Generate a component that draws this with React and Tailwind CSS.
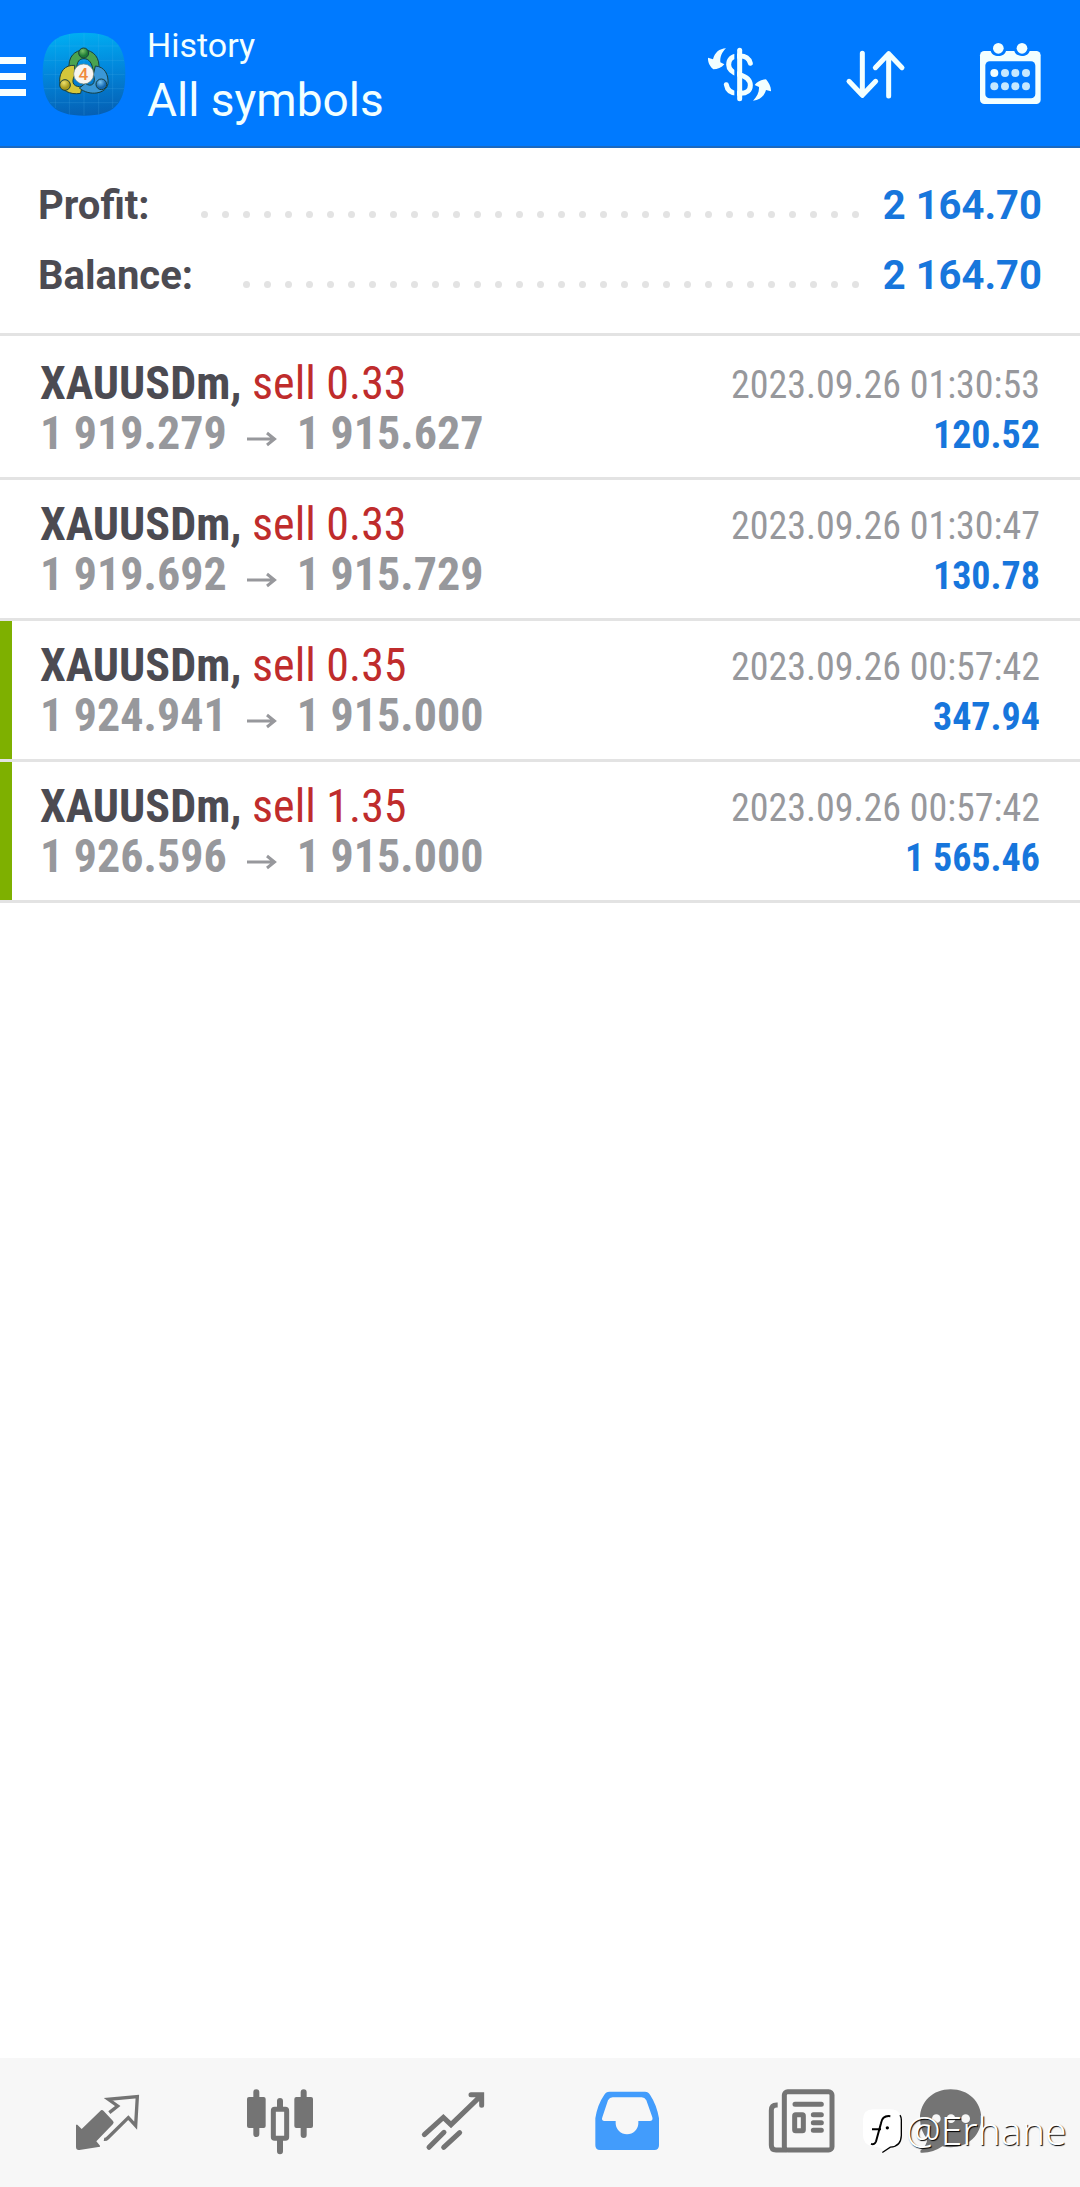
import { clsx } from "clsx";

const deals = [
  { id: 1, volume: "0.33", open: "1 919.279", close: "1 915.627", time: "2023.09.26 01:30:53", profit: "120.52" },
  { id: 2, volume: "0.33", open: "1 919.692", close: "1 915.729", time: "2023.09.26 01:30:47", profit: "130.78" },
  { id: 3, volume: "0.35", open: "1 924.941", close: "1 915.000", time: "2023.09.26 00:57:42", profit: "347.94", tp: true },
  { id: 4, volume: "1.35", open: "1 926.596", close: "1 915.000", time: "2023.09.26 00:57:42", profit: "1 565.46", tp: true },
];

function AppLogo() {
  return (
    <svg viewBox="36 36 252 252" className="size-[84px]">
      <defs>
        <linearGradient id="sky" x1="0.4" y1="0" x2="0.5" y2="1">
          <stop offset="0" stopColor="#00aef2" />
          <stop offset="0.45" stopColor="#0288dc" />
          <stop offset="1" stopColor="#0560b4" />
        </linearGradient>
        <radialGradient id="green" cx="0.4" cy="0.3">
          <stop offset="0" stopColor="#7cc46a" />
          <stop offset="1" stopColor="#1c7a35" />
        </radialGradient>
        <radialGradient id="yellow" cx="0.4" cy="0.3">
          <stop offset="0" stopColor="#eee06a" />
          <stop offset="1" stopColor="#a79a1c" />
        </radialGradient>
        <radialGradient id="blue" cx="0.4" cy="0.3">
          <stop offset="0" stopColor="#7cc6f0" />
          <stop offset="1" stopColor="#1467b0" />
        </radialGradient>
      </defs>
      <path
        d="M162 38C252 38 286 72 286 162S252 287 162 287 38 252 38 162 72 38 162 38Z"
        fill="url(#sky)"
      />
      <path
        d="M76 60V264M118 42V284M162 40V286M206 42V284M248 60V264M58 78H266M42 121H282M42 163H284M42 206H282M60 248H264"
        stroke="#55b6f0"
        strokeOpacity="0.28"
        strokeWidth="2"
      />
      <g stroke="#173f3f" strokeWidth="3">
        <path d="M118 148C112 112 134 90 162 90S212 114 206 150L190 158C188 128 176 116 162 116S140 124 140 148Z" fill="#4aa350" />
        <path d="M134 136C104 134 88 156 89 184C90 210 120 226 152 220L156 200C136 202 120 192 134 166Z" fill="#d5c63a" />
        <path d="M196 138C224 140 236 164 234 190C230 222 178 230 148 204L166 190C184 204 200 190 190 164Z" fill="#3b97d6" />
        <circle cx="161" cy="99" r="15" fill="url(#green)" />
        <circle cx="105" cy="195" r="16" fill="url(#yellow)" />
        <circle cx="214" cy="193" r="16" fill="url(#blue)" />
      </g>
      <circle cx="161" cy="162" r="30" fill="#f7f5f2" stroke="#7e8c7c" strokeWidth="2" />
      <text x="160" y="180" textAnchor="middle" fontFamily="Roboto" fontWeight="500" fontSize="52" fill="#f08a3c">
        4
      </text>
    </svg>
  );
}

function CurrencyIcon() {
  return (
    <svg viewBox="72 60 216 216" className="size-[72px]">
      <path
        d="M211 130C208 116 196 108 180 108H174C156 108 146 118 146 134C146 150 158 158 178 164C200 170 211 180 211 196C211 212 200 220 182 220H172C154 220 142 212 139 194"
        fill="none"
        stroke="#f2ffff"
        strokeWidth="15"
        strokeLinecap="round"
      />
      <path d="M167 90V245" stroke="#007aff" strokeWidth="8" />
      <path d="M179 91V236" stroke="#f2ffff" strokeWidth="15" strokeLinecap="round" />
      <g fill="#f2ffff">
        <path d="M138 85C118 86 104 98 99 118L84 113C83 128 91 140 100 148C112 148 125 143 133 133L121 127C120 110 125 98 138 85Z" />
        <path d="M219 242C240 240 253 228 258 210L273 214C274 201 266 188 258 178C244 179 231 185 224 195L237 201C238 216 231 230 219 242Z" />
      </g>
    </svg>
  );
}

function SortIcon() {
  return (
    <svg viewBox="477 60 216 216" className="size-[72px]">
      <path
        d="M547 100V225M507 184L547 226L587 184M626 228V101M586 143L626 101L666 143"
        fill="none"
        stroke="#f2ffff"
        strokeWidth="15"
        strokeLinecap="round"
        strokeLinejoin="round"
      />
    </svg>
  );
}

function CalendarIcon() {
  return (
    <svg viewBox="882 60 216 216" className="size-[72px]">
      <rect x="900" y="93" width="182" height="159" rx="13" fill="#f2ffff" />
      <rect x="916" y="124" width="150" height="111" rx="13" fill="#007aff" />
      <path d="M932 90V93C934 102 944 108 955 108S976 102 978 93V90ZM1003 90V93C1005 102 1015 108 1026 108S1047 102 1049 93V90Z" fill="#007aff" />
      <g fill="#f2ffff">
        <circle cx="955" cy="85" r="16" />
        <circle cx="1026" cy="85" r="16" />
        <circle cx="943" cy="159" r="12" />
      </g>
      <g fill="#c5e8ff">
        <circle cx="975" cy="159" r="12" />
        <circle cx="1006" cy="159" r="12" />
        <circle cx="1038" cy="159" r="12" />
        <circle cx="943" cy="199" r="12" />
        <circle cx="975" cy="199" r="12" />
        <circle cx="1006" cy="199" r="12" />
        <circle cx="1038" cy="199" r="12" />
      </g>
    </svg>
  );
}

function Header() {
  return (
    <header className="flex h-[148px] items-start border-b-2 border-[#1b69c0] bg-[#007aff] text-[#f2ffff]">
      <div className="mt-[57px] flex w-[26px] flex-col gap-[9px]">
        <span className="h-[7px] bg-[#f8ffff]" />
        <span className="h-[7px] bg-[#f8ffff]" />
        <span className="h-[7px] bg-[#f8ffff]" />
      </div>
      <div className="mt-8 ml-4">
        <AppLogo />
      </div>
      <div className="mt-[24px] ml-[21px] flex-1">
        <div className="text-[34px] leading-[42px]">History</div>
        <h1 className="mt-[7px] text-[46px] leading-[54px]">All symbols</h1>
      </div>
      <div className="mt-10 mr-[34px] flex gap-[63px]">
        <CurrencyIcon />
        <SortIcon />
        <CalendarIcon />
      </div>
    </header>
  );
}

function SummaryRow({ label, value, dots }) {
  return (
    <div className="flex h-[70px] items-center justify-between text-[40px] font-bold">
      <span className="text-[#4c4b52]">{label}</span>
      <div className="flex items-center">
        <div className="mt-[17px] mr-[24px] flex gap-[14px]">
          {Array.from({ length: dots }, (_, i) => (
            <span key={i} className="size-[7px] rounded-full bg-[#e3e3e3]" />
          ))}
        </div>
        <span className="text-[#1776dc]">{value}</span>
      </div>
    </div>
  );
}

function DealRow({ deal }) {
  return (
    <li
      className={clsx(
        "flex h-[141px] justify-between border-b-3 border-[#e3e3e3] pr-10 font-stretch-condensed",
        deal.tp ? "pl-7" : "pl-10"
      )}
    >
      {deal.tp && <div className="-ml-7 h-full w-3 bg-[#7eb000]" />}
      <div className={clsx("flex-1 pt-[19px] text-[46px] leading-[50px]", deal.tp && "pl-7")}>
        <div>
          <span className="font-bold text-[#4c4b52]">XAUUSDm,</span>{" "}
          <span className="text-[#bf2c2c]">sell {deal.volume}</span>
        </div>
        <div className="flex items-center font-bold text-[#97989c]">
          <span>{deal.open}</span>
          <svg viewBox="0 0 30 16" className="mx-[20px] mt-[12px] h-4 w-[30px]">
            <path d="M0 8H27M20 2L27.5 8L20 14" fill="none" stroke="#97989c" strokeWidth="3" />
          </svg>
          <span>{deal.close}</span>
        </div>
      </div>
      <div className="pt-[21px] text-right text-[38px] leading-[50px]">
        <div className="text-[#97989c]">{deal.time}</div>
        <div className="font-bold text-[#1776dc]">{deal.profit}</div>
      </div>
    </li>
  );
}

function BottomNav() {
  return (
    <nav className="flex h-[129px] gap-[101px] bg-[#f7f7f7] pt-[27px] pl-[72px] text-[#747474]">
      <svg viewBox="96 135 216 216" className="size-[72px] shrink-0">
        <path
          d="M183 211Q187 209 191 213L219 243Q223 248 219 252L169 304L180 317V320L118 330Q108 331 108 321V254H112L125 267Z"
          fill="currentColor"
        />
        <path
          d="M208 218L233 198L205 178L292 170L287 257L265 233L203 294Q198 299 192 298"
          fill="none"
          stroke="currentColor"
          strokeWidth="10"
        />
      </svg>

      <svg viewBox="615 135 216 216" className="size-[72px] shrink-0">
        <path d="M649 157V282M791 157V285M720 183V208M720 295V334" stroke="currentColor" strokeWidth="18" strokeLinecap="round" />
        <rect x="621" y="171" width="56" height="93" rx="6" fill="currentColor" />
        <rect x="763" y="171" width="56" height="93" rx="6" fill="currentColor" />
        <rect x="700" y="208" width="40" height="87" rx="4" fill="#f7f7f7" stroke="currentColor" strokeWidth="15" />
      </svg>

      <svg viewBox="1134 135 216 216" className="size-[72px] shrink-0">
        <path
          d="M1153 284L1210 232L1233 254L1324 166M1293 164H1325V196M1167 322L1212 277M1211 322L1259 278"
          fill="none"
          stroke="currentColor"
          strokeWidth="15"
          strokeLinecap="round"
        />
      </svg>

      <svg viewBox="93 135 216 216" className="size-[72px] shrink-0">
        <path
          d="M148 155H255Q265 155 270 164Q290 194 297 235V316Q297 330 283 330H120Q106 330 106 316V235Q112 194 133 164Q138 155 148 155Z"
          fill="#429cfc"
        />
        <path
          d="M158 172H245Q254 172 259 181L277 232Q280 243 269 243H235V250A34 33 0 0 1 167 250V243H134Q123 243 127 232L144 181Q149 172 158 172Z"
          fill="#f7f7f7"
        />
      </svg>

      <svg viewBox="612 135 216 216" className="size-[72px] shrink-0">
        <g fill="none" stroke="currentColor" strokeWidth="15">
          <rect x="673" y="155" width="143" height="175" rx="10" />
          <path d="M653 195H650Q634 195 634 211V316Q634 330 648 330H680" />
          <path d="M705 193H784M760 224H784M760 248H784M760 271H784" strokeLinecap="round" />
          <rect x="704" y="224" width="26" height="48" rx="3" />
        </g>
      </svg>

      <div className="relative -ml-6 size-[72px] shrink-0">
        <svg viewBox="1059 135 216 216" className="size-[72px]">
          <path
            d="M1172 148C1225 148 1264 185 1264 235S1225 322 1172 322Q1158 322 1147 319Q1118 340 1082 338Q1080 334 1082 331Q1100 318 1102 297Q1080 272 1080 235C1080 185 1119 148 1172 148Z"
            fill="currentColor"
          />
          <g fill="#f7f7f7">
            <circle cx="1129" cy="236" r="13" />
            <circle cx="1173" cy="236" r="13" />
            <circle cx="1217" cy="236" r="13" />
          </g>
        </svg>

        {/* author stamp, lies over the chat button */}
        <div className="absolute top-[21px] -left-[51px] flex items-center whitespace-nowrap">
          <svg viewBox="905 200 120 140" className="h-[47px] w-10">
            <path
              d="M938 206H990Q1022 206 1022 238V285Q1022 318 990 320L966 336L964 324Q950 318 936 317Q908 312 908 284V238Q908 206 938 206Z"
              fill="#fff"
            />
            <path d="M1019 224Q1024 232 1023 245V285Q1022 318 990 320L966 336" fill="none" stroke="#000" strokeWidth="4" />
            <path
              d="M990 227Q966 224 962 248L947 303Q943 314 932 310M935 266H962"
              fill="none"
              stroke="#000"
              strokeWidth="6"
            />
            <circle cx="981" cy="262" r="5" fill="#000" />
          </svg>
          <span className="ml-[4px] font-['Noto_Sans'] text-[39px] leading-[48px] font-light text-white [text-shadow:1px_1px_1px_#000]">
            @Erhane
          </span>
        </div>
      </div>
    </nav>
  );
}

export default function App() {
  return (
    <div className="flex h-[2187px] w-[1080px] flex-col overflow-hidden bg-white font-[Roboto,sans-serif]">
      <Header />
      <section className="h-[188px] border-b-3 border-[#e3e3e3] px-[38px] pt-[23px]">
        <SummaryRow label="Profit:" value="2 164.70" dots={32} />
        <SummaryRow label="Balance:" value="2 164.70" dots={30} />
      </section>
      <ul className="flex-1 pt-[3px]">
        {deals.map((deal) => (
          <DealRow key={deal.id} deal={deal} />
        ))}
      </ul>
      <BottomNav />
    </div>
  );
}
